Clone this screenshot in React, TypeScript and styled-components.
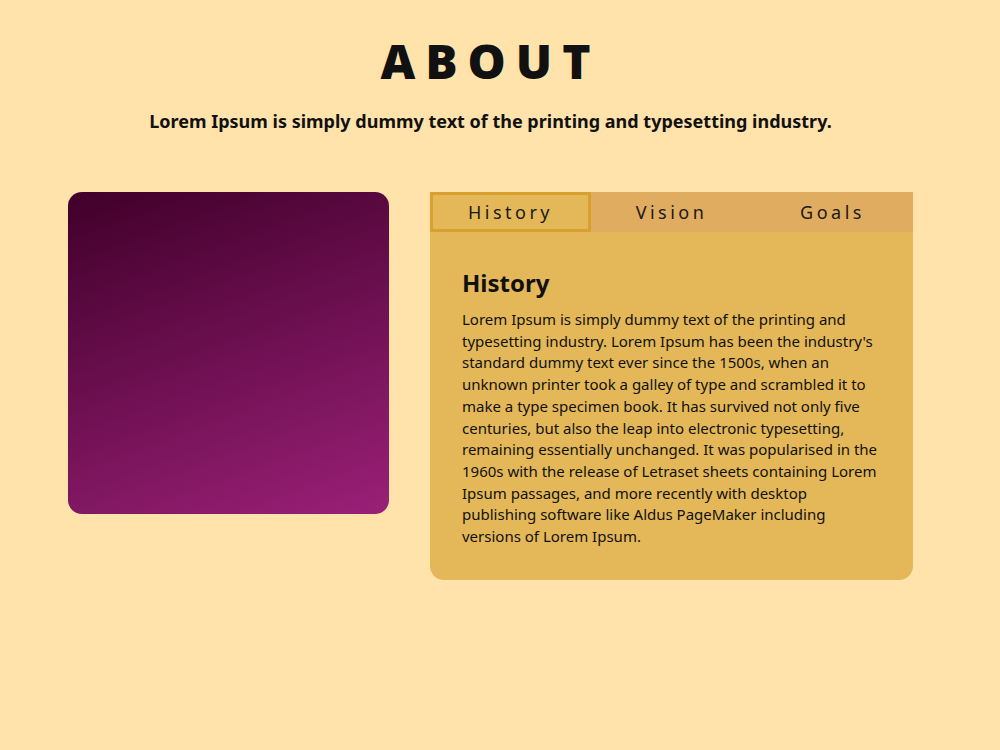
import React, { useState } from "react";
import styled, { createGlobalStyle } from "styled-components";

const GlobalStyle = createGlobalStyle`
  body {
    margin: 0;
    background-color: #ffe3ab;
    font-family: "Noto Sans", "Open Sans", sans-serif;
    color: #111111;
  }
`;

const Page = styled.div`
  min-height: 750px;
  padding: 38px 19px 0 0;
  box-sizing: border-box;
  display: flex;
  flex-direction: column;
  align-items: center;
`;

const Title = styled.h1`
  margin: 0;
  font-size: 48px;
  font-weight: 900;
  letter-spacing: 10px;
  line-height: 46px;
  font-family: "Noto Sans", sans-serif;
`;

const Subtitle = styled.p`
  margin: 25px 0 0;
  font-size: 18px;
  font-weight: 700;
`;

const Row = styled.div`
  margin-top: 59px;
  display: flex;
  gap: 41px;
  align-items: flex-start;
`;

const Picture = styled.div`
  width: 321px;
  height: 322px;
  border-radius: 14px;
  background: linear-gradient(160deg, #40002a 0%, #9a2077 100%);
`;

const Panel = styled.div`
  width: 483px;
  background-color: #e4b858;
  border-radius: 0 0 14px 14px;
  overflow: hidden;
`;

const TabBar = styled.div`
  display: grid;
  grid-template-columns: repeat(3, 1fr);
  background-color: #dfac60;
`;

const Tab = styled.button<{ $active: boolean }>`
  height: 40px;
  border: 3px solid ${(p) => (p.$active ? "#d8a02e" : "transparent")};
  background-color: ${(p) => (p.$active ? "#e4b858" : "transparent")};
  font-family: "Noto Sans", sans-serif;
  font-size: 18px;
  letter-spacing: 3.5px;
  color: #1a1a1a;
  cursor: pointer;
  padding: 0;
`;

const Content = styled.div`
  padding: 34px 32px 32px;
`;

const Heading = styled.h2`
  margin: 0 0 10px;
  font-size: 24px;
  font-weight: 700;
`;

const Body = styled.p`
  margin: 0;
  font-size: 15px;
  line-height: 21.7px;
`;

const text =
  "Lorem Ipsum is simply dummy text of the printing and typesetting industry. Lorem Ipsum has been the industry's standard dummy text ever since the 1500s, when an unknown printer took a galley of type and scrambled it to make a type specimen book. It has survived not only five centuries, but also the leap into electronic typesetting, remaining essentially unchanged. It was popularised in the 1960s with the release of Letraset sheets containing Lorem Ipsum passages, and more recently with desktop publishing software like Aldus PageMaker including versions of Lorem Ipsum.";

const tabs = ["History", "Vision", "Goals"];

const App: React.FC = () => {
  const [active, setActive] = useState(0);
  return (
    <Page>
      <GlobalStyle />
      <Title>ABOUT</Title>
      <Subtitle>
        Lorem Ipsum is simply dummy text of the printing and typesetting industry.
      </Subtitle>
      <Row>
        <Picture />
        <Panel>
          <TabBar>
            {tabs.map((t, i) => (
              <Tab key={t} $active={i === active} onClick={() => setActive(i)}>
                {t}
              </Tab>
            ))}
          </TabBar>
          <Content>
            <Heading>{tabs[active]}</Heading>
            <Body>{text}</Body>
          </Content>
        </Panel>
      </Row>
    </Page>
  );
};

export default App;
